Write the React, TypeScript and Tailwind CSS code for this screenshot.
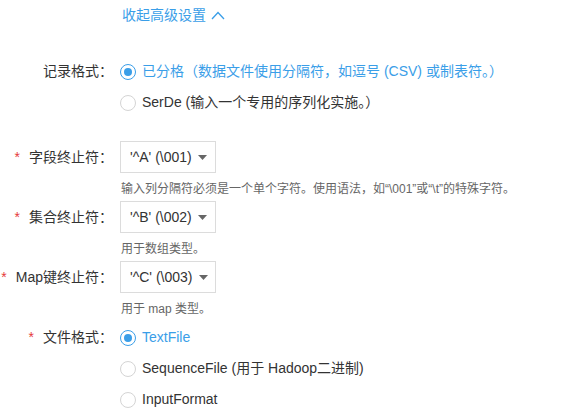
import React from 'react';

const font = { fontFamily: '"Liberation Sans", "Noto Sans CJK SC", sans-serif' };

function Radio({ checked, label }: { checked?: boolean; label: string }) {
  return (
    <div className="flex h-[31px] items-center whitespace-nowrap">
      <span
        className={
          checked
            ? 'flex h-4 w-4 items-center justify-center rounded-full border border-[#3a9ee8] bg-white'
            : 'h-4 w-4 rounded-full border border-[#d4d4d4] bg-white'
        }
      >
        {checked && <span className="h-2 w-2 rounded-full bg-[#3a9ee8]" />}
      </span>
      <span className={checked ? 'ml-[6px] text-[14px] text-[#3a9ee8]' : 'ml-[6px] text-[14px] text-[#333]'}>{label}</span>
    </div>
  );
}

function Label({ text, required }: { text: string; required?: boolean }) {
  return (
    <div className="flex w-[120px] shrink-0 justify-end whitespace-nowrap pr-[7px] text-[14px] text-[#333]">
      {required && <span className="mr-[9px] text-[#e5393b]">*</span>}
      <span>{text}</span>
    </div>
  );
}

function Select({ value }: { value: string }) {
  return (
    <div className="flex h-[32px] w-[96px] items-center whitespace-nowrap border border-[#dcdcdc] bg-white pl-[9px] text-[14px] text-[#333]">
      <span>{value}</span>
      <svg className="ml-[6px]" width="9" height="5" viewBox="0 0 9 5">
        <path d="M0 0 H9 L4.5 5 Z" fill="#666" />
      </svg>
    </div>
  );
}

function Help({ text }: { text: string }) {
  return <div className="mt-[8px] mb-[4px] h-[16px] whitespace-nowrap pl-[121px] text-[12px] leading-[16px] text-[#666]">{text}</div>;
}

export default function App() {
  return (
    <div className="h-[409px] w-[571px] overflow-hidden bg-white" style={font}>
      <div className="flex h-[30px] items-center pl-[122px] text-[14px] text-[#3a9ee8]">
        <span>收起高级设置</span>
        <svg className="ml-[5px]" width="14" height="9" viewBox="0 0 14 9">
          <polyline points="1,8 7,1.5 13,8" fill="none" stroke="#3a9ee8" strokeWidth="1.3" />
        </svg>
      </div>

      <div className="mt-[26px] flex">
        <div className="flex h-[31px] items-center">
          <Label text="记录格式：" />
        </div>
        <div>
          <Radio checked label="已分格（数据文件使用分隔符，如逗号 (CSV) 或制表符。）" />
          <Radio label="SerDe (输入一个专用的序列化实施。）" />
        </div>
      </div>

      <div className="mt-[23px] flex items-center">
        <Label text="字段终止符：" required />
        <Select value="'^A' (\001)" />
      </div>
      <Help text="输入列分隔符必须是一个单个字符。使用语法，如“\001”或“\t”的特殊字符。" />

      <div className="flex items-center">
        <Label text="集合终止符：" required />
        <Select value="'^B' (\002)" />
      </div>
      <Help text="用于数组类型。" />

      <div className="flex items-center">
        <Label text="Map键终止符：" required />
        <Select value="'^C' (\003)" />
      </div>
      <Help text="用于 map 类型。" />

      <div className="mt-[5px] flex">
        <div className="flex h-[31px] items-center">
          <Label text="文件格式：" required />
        </div>
        <div>
          <Radio checked label="TextFile" />
          <Radio label="SequenceFile (用于 Hadoop二进制)" />
          <Radio label="InputFormat" />
        </div>
      </div>
    </div>
  );
}
